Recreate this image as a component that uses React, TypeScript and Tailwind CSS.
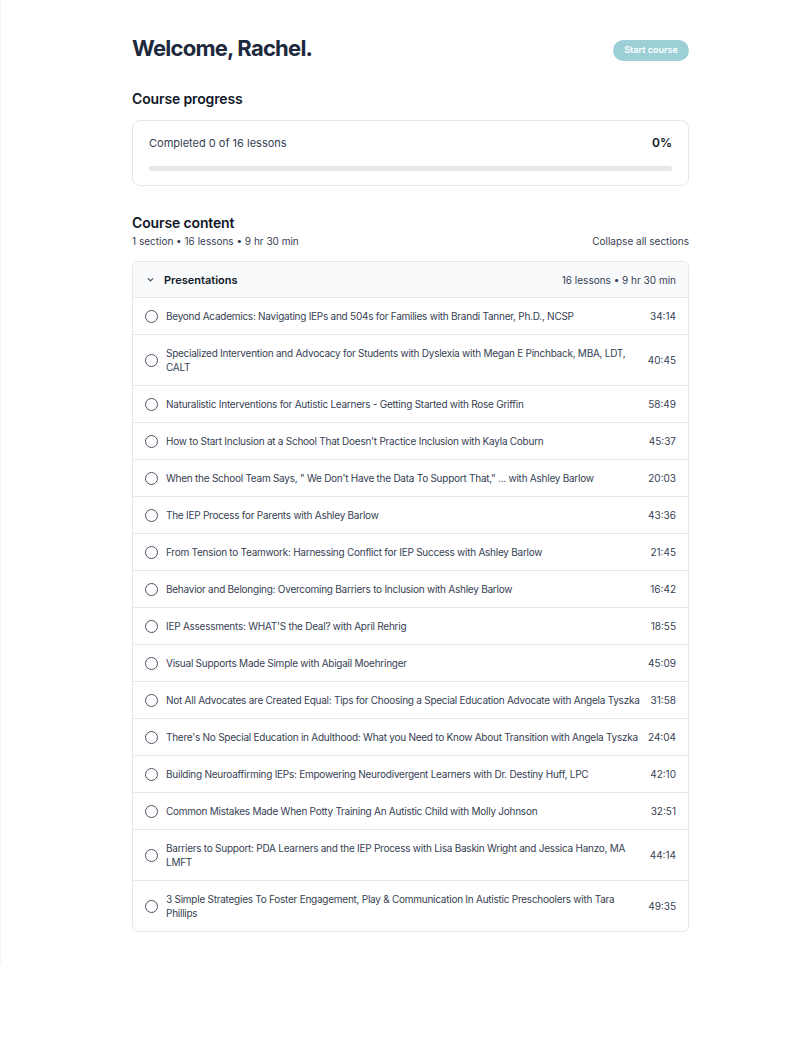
import React from 'react';

const lessons: { title: string; time: string }[] = [
  { title: 'Beyond Academics: Navigating IEPs and 504s for Families with Brandi Tanner, Ph.D., NCSP', time: '34:14' },
  { title: 'Specialized Intervention and Advocacy for Students with Dyslexia with Megan E Pinchback, MBA, LDT, CALT', time: '40:45' },
  { title: 'Naturalistic Interventions for Autistic Learners - Getting Started with Rose Griffin', time: '58:49' },
  { title: "How to Start Inclusion at a School That Doesn't Practice Inclusion with Kayla Coburn", time: '45:37' },
  { title: 'When the School Team Says, " We Don\'t Have the Data To Support That," ... with Ashley Barlow', time: '20:03' },
  { title: 'The IEP Process for Parents with Ashley Barlow', time: '43:36' },
  { title: 'From Tension to Teamwork: Harnessing Conflict for IEP Success with Ashley Barlow', time: '21:45' },
  { title: 'Behavior and Belonging: Overcoming Barriers to Inclusion with Ashley Barlow', time: '16:42' },
  { title: "IEP Assessments: WHAT'S the Deal? with April Rehrig", time: '18:55' },
  { title: 'Visual Supports Made Simple with Abigail Moehringer', time: '45:09' },
  { title: 'Not All Advocates are Created Equal: Tips for Choosing a Special Education Advocate with Angela Tyszka', time: '31:58' },
  { title: "There's No Special Education in Adulthood: What you Need to Know About Transition with Angela Tyszka", time: '24:04' },
  { title: 'Building Neuroaffirming IEPs: Empowering Neurodivergent Learners with Dr. Destiny Huff, LPC', time: '42:10' },
  { title: 'Common Mistakes Made When Potty Training An Autistic Child with Molly Johnson', time: '32:51' },
  { title: 'Barriers to Support: PDA Learners and the IEP Process with Lisa Baskin Wright and Jessica Hanzo, MA LMFT', time: '44:14' },
  { title: '3 Simple Strategies To Foster Engagement, Play & Communication In Autistic Preschoolers with Tara Phillips', time: '49:35' },
];

function LessonRow({ title, time }: { title: string; time: string }) {
  return (
    <li className="flex items-center gap-[6px] border-t border-gray-200 pl-[12px] pr-[12px] py-[11px]">
      <span className="h-[13px] w-[13px] shrink-0 rounded-full border-[1.5px] border-gray-600" />
      <span className="flex-1 pl-[2px] text-[10px] leading-[14px] tracking-[-0.025em] text-gray-700">{title}</span>
      <span className="shrink-0 text-[10px] leading-[14px] text-gray-700">{time}</span>
    </li>
  );
}

export default function App() {
  return (
    <div className="min-h-[963px] border-l border-gray-100 bg-white font-['Inter',sans-serif] text-gray-800">
      <div className="ml-[131px] w-[557px] pt-[33px] pb-[32px]">
        {/* header */}
        <div className="flex items-center justify-between">
          <h1 className="text-[22px] font-bold leading-[30px] tracking-[-0.035em] text-slate-800">Welcome, Rachel.</h1>
          <button className="mt-[4px] h-[21px] w-[76px] rounded-full bg-[#9ccfd6] text-[9px] font-semibold text-white">
            Start course
          </button>
        </div>

        <h2 className="mt-[26px] text-[14px] font-semibold leading-[20px] tracking-[-0.01em] text-gray-900">Course progress</h2>
        <div className="mt-[11px] rounded-lg border border-gray-200 px-[16px] pt-[14px] pb-[14px]">
          <div className="flex items-center justify-between text-[11px] leading-[16px]">
            <span className="text-gray-700">Completed 0 of 16 lessons</span>
            <span className="text-[12px] font-semibold text-gray-900">0%</span>
          </div>
          <div className="mt-[15px] h-[5px] rounded-full bg-gray-200" />
        </div>

        <h2 className="mt-[27px] text-[14px] font-semibold leading-[20px] tracking-[-0.01em] text-gray-900">Course content</h2>
        <div className="mt-[1px] flex items-center justify-between text-[10px] leading-[14px] text-gray-700">
          <span>1 section • 16 lessons • 9 hr 30 min</span>
          <span>Collapse all sections</span>
        </div>

        <div className="mt-[13px] overflow-hidden rounded-md border border-gray-200">
          <div className="flex items-center justify-between bg-gray-50 px-[12px] py-[9.5px]">
            <div className="flex items-center gap-[8px]">
              <svg width="11" height="11" viewBox="0 0 24 24" fill="none" stroke="#374151" strokeWidth="2.2" strokeLinecap="round" strokeLinejoin="round">
                <path d="M7 10l5 5 5-5" />
              </svg>
              <span className="text-[11px] font-semibold leading-[16px] text-gray-900">Presentations</span>
            </div>
            <span className="text-[10px] leading-[14px] text-gray-700">16 lessons • 9 hr 30 min</span>
          </div>
          <ul>
            {lessons.map((l) => (
              <LessonRow key={l.title} title={l.title} time={l.time} />
            ))}
          </ul>
        </div>
      </div>
    </div>
  );
}
